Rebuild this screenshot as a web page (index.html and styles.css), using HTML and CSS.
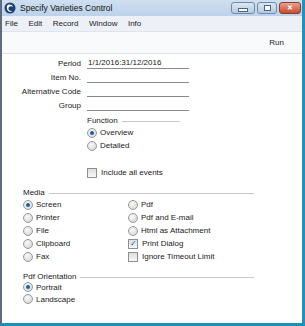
FILE: index.html
```html
<!DOCTYPE html>
<html lang="en">
<head>
    <meta charset="UTF-8">
    <title>Specify Varieties Control</title>
    <link rel="stylesheet" href="styles.css">
</head>
<body>

<div class="window">
    <div class="titlebar">
        <svg class="app-icon" width="12" height="12" viewBox="0 0 12 12">
            <circle cx="6" cy="6" r="5.5" fill="#1d3f73"/>
            <path d="M3 4 C4 2, 8 2, 9 5 C8 4, 5 4, 4.5 6 C4 8, 6 9.5, 8.5 9 C6 11, 2 9, 3 4 Z" fill="#fff"/>
        </svg>
        <span class="title">Specify Varieties Control</span>
        <div class="win-buttons">
            <div class="wbtn min"><span class="min-glyph"></span></div>
            <div class="wbtn max"><span class="max-glyph"></span></div>
            <div class="wbtn close">&#x2715;</div>
        </div>
    </div>

    <div class="menubar">
        <span>File</span>
        <span>Edit</span>
        <span>Record</span>
        <span>Window</span>
        <span>Info</span>
    </div>

    <div class="toolbar">
        <span class="run">Run</span>
    </div>

    <div class="content">
        <div class="fields">
            <label>Period</label><div class="field">1/1/2016:31/12/2016</div>
            <label>Item No.</label><div class="field"></div>
            <label>Alternative Code</label><div class="field"></div>
            <label>Group</label><div class="field"></div>
        </div>

        <div class="function">
            <div class="group-title short">Function</div>
            <div class="opt"><span class="radio on"></span>Overview</div>
            <div class="opt"><span class="radio"></span>Detailed</div>
            <div class="opt events"><span class="check"></span>Include all events</div>
        </div>

        <div class="section">
            <div class="group-title">Media</div>
            <div class="columns">
                <div class="col">
                    <div class="opt"><span class="radio on"></span>Screen</div>
                    <div class="opt"><span class="radio"></span>Printer</div>
                    <div class="opt"><span class="radio"></span>File</div>
                    <div class="opt"><span class="radio"></span>Clipboard</div>
                    <div class="opt"><span class="radio"></span>Fax</div>
                </div>
                <div class="col">
                    <div class="opt"><span class="radio"></span>Pdf</div>
                    <div class="opt"><span class="radio"></span>Pdf and E-mail</div>
                    <div class="opt"><span class="radio"></span>Html as Attachment</div>
                    <div class="opt"><span class="check on"></span>Print Dialog</div>
                    <div class="opt"><span class="check"></span>Ignore Timeout Limit</div>
                </div>
            </div>
        </div>

        <div class="section orientation">
            <div class="group-title">Pdf Orientation</div>
            <div class="opt"><span class="radio on"></span>Portrait</div>
            <div class="opt"><span class="radio"></span>Landscape</div>
        </div>
    </div>
</div>

</body>
</html>
```

FILE: styles.css
```css
body {
    margin: 0;
    padding: 0;
    font-family: "Liberation Sans", Arial, sans-serif;
    font-size: 8px;
    color: #1a1a1a;
    background: #fff;
}
.window {
    width: 305px;
    height: 326px;
    box-sizing: border-box;
    border-left: 2px solid #5d6d7e;
    border-right: 3px solid #2a8fb8;
    border-bottom: 3px solid #1e90b8;
    background: #fff;
    display: flex;
    flex-direction: column;
    overflow: hidden;
}
.titlebar {
    height: 16px;
    background: linear-gradient(#cfdff0, #bcd2ea);
    display: flex;
    align-items: center;
    padding-left: 2px;
    margin-left: -2px;
    margin-right: -3px;
    position: relative;
}
.app-icon {
    margin-left: 2px;
    margin-right: 4px;
}
.title {
    font-size: 8.5px;
    color: #111;
}
.win-buttons {
    margin-left: auto;
    display: flex;
    gap: 2px;
    margin-right: 4px;
    align-self: flex-start;
    margin-top: 2px;
}
.wbtn {
    height: 12px;
    border: 1px solid #6f8aa8;
    border-radius: 3px;
    box-sizing: border-box;
    display: flex;
    align-items: center;
    justify-content: center;
    background: linear-gradient(#dbe7f4, #b4c9e0);
}
.min { width: 24px; }
.max { width: 20px; }
.close {
    width: 22px;
    background: linear-gradient(#e8a18f, #c74a30);
    border-color: #8f3b2b;
    color: #fff;
    font-size: 7px;
    font-weight: bold;
}
.min-glyph {
    width: 8px;
    height: 2px;
    background: #fff;
    border: 1px solid #4b6584;
    margin-top: 3px;
}
.max-glyph {
    width: 5px;
    height: 4px;
    border: 1px solid #4b6584;
    background: #fff;
}
.menubar {
    height: 15px;
    background: #edf1f7;
    display: flex;
    align-items: center;
    gap: 10.5px;
    padding-left: 3px;
    border-bottom: 1px solid #dfe5ee;
}
.toolbar {
    height: 21px;
    background: #f9fafb;
    border-bottom: 1px solid #e2e2e2;
    display: flex;
    align-items: center;
    justify-content: flex-end;
    padding-right: 18px;
}
.content {
    padding-top: 3px;
}
.fields {
    display: grid;
    grid-template-columns: 79px 102px;
    column-gap: 6px;
    grid-auto-rows: 14px;
    line-height: 14px;
}
.fields label {
    text-align: right;
}
.field {
    border-bottom: 1px solid #8a8a8a;
    height: 11px;
    line-height: 12px;
    padding-left: 1px;
}
.function {
    margin-left: 85px;
    margin-top: 1px;
}
.group-title {
    display: flex;
    align-items: center;
    height: 12px;
    gap: 4px;
}
.group-title::after {
    content: "";
    flex: 1;
    border-top: 1px solid #c8c8c8;
    margin-top: 2px;
}
.group-title.short {
    width: 93px;
}
.opt {
    display: flex;
    align-items: center;
    height: 13px;
}
.events {
    margin-top: 14px;
}
.radio {
    width: 8px;
    height: 8px;
    border-radius: 50%;
    border: 1px solid #9a9a9a;
    background: radial-gradient(circle at 40% 35%, #fafafa, #cfcfcf);
    margin-right: 3px;
    position: relative;
}
.radio.on::after {
    content: "";
    position: absolute;
    left: 2px;
    top: 2px;
    width: 4px;
    height: 4px;
    border-radius: 50%;
    background: #1d5f9c;
}
.check {
    width: 8px;
    height: 8px;
    border: 1px solid #8f8f8f;
    background: linear-gradient(#dedede, #f8f8f8);
    margin-right: 4px;
    position: relative;
    font-size: 8px;
    line-height: 8px;
    text-align: center;
    color: #2251a3;
}
.check.on::after {
    content: "\2713";
}
.section {
    margin-left: 21px;
    margin-top: 7px;
    width: 231px;
}
.columns {
    display: grid;
    grid-template-columns: 105px 1fr;
}
.orientation {
    margin-top: 8px;
}
.orientation .group-title {
    height: 10px;
}
.orientation .opt {
    height: 12px;
}
```
